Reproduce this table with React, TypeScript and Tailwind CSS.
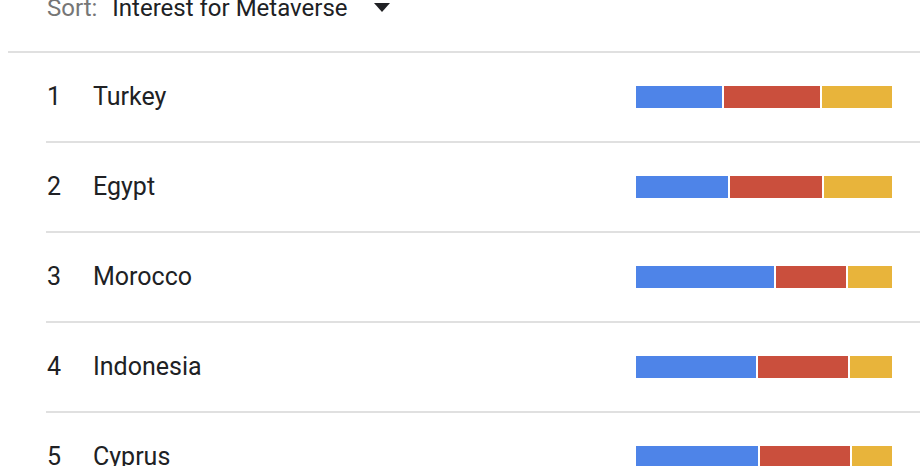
const rows = [
  { rank: 1, name: "Turkey", parts: [86, 96, 70] },
  { rank: 2, name: "Egypt", parts: [92, 92, 68] },
  { rank: 3, name: "Morocco", parts: [138, 70, 44] },
  { rank: 4, name: "Indonesia", parts: [120, 90, 42] },
  { rank: 5, name: "Cyprus", parts: [122, 90, 40] },
];

const colors = ["bg-[#4e84e8]", "bg-[#ca4f3d]", "bg-[#e8b43b]"];

function Bar({ parts }: { parts: number[] }) {
  return (
    <div className="flex h-[22px] w-[256px] gap-[2px]">
      {parts.map((w, i) => (
        <div key={i} className={`h-full ${colors[i]}`} style={{ width: w }} />
      ))}
    </div>
  );
}

export default function App() {
  return (
    <div className="h-[466px] w-[920px] overflow-hidden bg-white font-['Roboto',sans-serif] text-[#202124]">
      <div className="ml-[8px] flex h-[53px] items-start border-b-2 border-[#e0e0e0]">
        <div className="-mt-[6px] flex items-center pl-[39px] text-[24px] leading-[28px]">
          <span className="text-[#767676]">Sort:</span>
          <span className="ml-[15px]">Interest for Metaverse</span>
          <svg className="ml-[26px]" width="16" height="10" viewBox="0 0 16 10">
            <path d="M0 0H16L8 9Z" fill="#202124" />
          </svg>
        </div>
      </div>

      <div className="ml-[46px]">
        {rows.map((r) => (
          <div
            key={r.rank}
            className="flex h-[90px] items-center border-b-2 border-[#e0e0e0] pr-[28px] text-[25px]"
          >
            <span className="w-[47px] pl-[1px]">{r.rank}</span>
            <span className="flex-1">{r.name}</span>
            <Bar parts={r.parts} />
          </div>
        ))}
      </div>
    </div>
  );
}
